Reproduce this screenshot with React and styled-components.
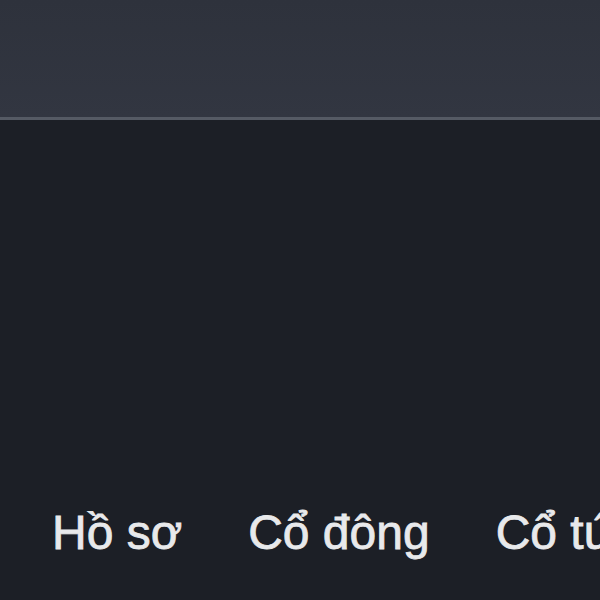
import React from "react";
import styled, { createGlobalStyle } from "styled-components";

const Global = createGlobalStyle`
  html, body { margin: 0; padding: 0; background: #1c1f26; overflow: hidden; }
  body { font-family: "Liberation Sans", Arial, sans-serif; }
`;

const Page = styled.div`
  width: 600px;
  height: 600px;
  display: flex;
  flex-direction: column;
  background: #1c1f26;
  overflow: hidden;
`;

const Header = styled.header`
  height: 117px;
  flex: none;
  background: linear-gradient(#2e323c, #323641);
  border-bottom: 3px solid #555a64;
`;

const Hero = styled.section`
  height: 385px;
  flex: none;
`;

const Tabs = styled.nav`
  display: flex;
  padding-left: 19px;
  white-space: nowrap;
`;

const Tab = styled.a`
  flex: none;
  padding: 0 33px;
  font-size: 48px;
  color: #e8e9eb;
  -webkit-text-stroke: 0.8px #e8e9eb;
  text-decoration: none;
  line-height: 55px;
`;

export default function App() {
  return (
    <>
      <Global />
      <Page>
        <Header />
        <Hero />
        <Tabs>
          <Tab>Hồ sơ</Tab>
          <Tab>Cổ đông</Tab>
          <Tab>Cổ tức</Tab>
        </Tabs>
      </Page>
    </>
  );
}
